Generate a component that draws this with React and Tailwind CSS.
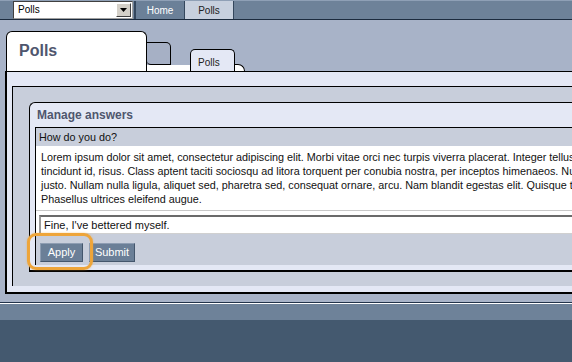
import React from "react";

export default function App() {
  return (
    <div className="relative w-[572px] h-[362px] overflow-hidden bg-[#a8b3c8] flex flex-col font-['Liberation_Sans',Arial,sans-serif] text-[#111]">
      {/* Top bar */}
      <div className="h-[20px] shrink-0 bg-[#6e8299] border-t border-t-[#8fa0b6] border-b border-b-[#1c2b3e] flex items-stretch">
        <div className="ml-[13px] w-[120px] h-[18px] bg-white border border-[#a0a0a0] border-t-[#404040] border-l-[#404040] flex items-center">
          <div className="flex-1 pl-[4px] text-[10px] leading-[12px] text-black">Polls</div>
          <div className="mr-[1px] w-[15px] h-[14px] bg-[#d4d0c8] border border-[#404040] border-t-white border-l-white flex items-center justify-center">
            <svg width="7" height="4" viewBox="0 0 7 4">
              <path d="M0 0H7L3.5 4Z" fill="#000" />
            </svg>
          </div>
        </div>
        <div className="ml-[1px] border-l-2 border-[#34475d] w-[50px] bg-[#6b8098] text-white text-[10px] flex items-center justify-center">
          Home
        </div>
        <div className="border-l border-[#34475d] w-[49px] bg-[#c7d0de] text-[#222] text-[10px] flex items-center justify-center">
          Polls
        </div>
        <div className="w-[1px] bg-[#34475d]" />
      </div>

      {/* Tabs */}
      <div className="h-[51px] shrink-0 flex items-end pl-[6px]">
        <div className="w-[141px] h-[40px] bg-white border border-b-0 border-black rounded-t-[6px] pl-[12px] pt-[9px] text-[16px] leading-[20px] font-bold text-[#4f566e]">
          Polls
        </div>
        <div className="w-[43px] h-[29px] flex flex-col">
          <div className="w-[24px] h-[23px] bg-[#a6b0c5] border-t border-r border-b border-black rounded-tr-[5px] rounded-bl-[4px]" />
          <div className="h-[6px] bg-white" />
        </div>
        <div className="w-[45px] h-[22px] bg-[#e4e8f5] border border-b-0 border-black rounded-t-[5px] pl-[7px] pt-[7px] text-[10px] leading-[12px] text-[#222]">
          Polls
        </div>
        <div className="w-[10px] h-[7px] bg-white border-t border-r border-black rounded-tr-[7px]" />
      </div>

      {/* Outer panel */}
      <div className="ml-[5px] w-[640px] shrink-0 border-t border-l-2 border-b-2 border-black bg-[#e4e8f5] pl-[5px] pt-[14px] pb-[6px]">
        <div className="border-t border-l border-black bg-[#c8cedb] pl-[16px] pt-[15px] pb-[14px]">
          <div className="border-t border-l border-b-2 border-black rounded-tl-[6px] bg-[#e4e8f5] pb-[5px]">
            <div className="h-[24px] pl-[7px] flex items-center text-[12px] font-bold text-[#4f566e]">
              Manage answers
            </div>
            <div className="ml-[5px] border-t border-l border-black">
              <div className="h-[18px] bg-[#c8cedb] pl-[3px] flex items-center text-[10.8px] text-[#111]">
                How do you do?
              </div>
              <div className="bg-white">
                <div className="pl-[5px] pt-[4px] pb-[4px] text-[10.8px] leading-[14px] text-[#111] whitespace-nowrap border-b border-[#c8c8c8]">
                  <div>Lorem ipsum dolor sit amet, consectetur adipiscing elit. Morbi vitae orci nec turpis viverra placerat. Integer tellus</div>
                  <div>tincidunt id, risus. Class aptent taciti sociosqu ad litora torquent per conubia nostra, per inceptos himenaeos. Nulla</div>
                  <div>justo. Nullam nulla ligula, aliquet sed, pharetra sed, consequat ornare, arcu. Nam blandit egestas elit. Quisque tempor</div>
                  <div>Phasellus ultrices eleifend augue.</div>
                </div>
                <div className="pt-[4px]">
                  <div className="ml-[3px] h-[19px] bg-white border-t-2 border-l-2 border-b border-t-[#6a6a6a] border-l-[#9a9a9a] border-b-[#d0d0d0] pl-[3px] flex items-center text-[11px] text-[#111]">
                    Fine, I've bettered myself.
                  </div>
                </div>
              </div>
              <div className="h-[31px] bg-[#c8cedb] pl-[4px] pt-[9px] flex items-start">
                <div className="w-[43px] h-[19px] bg-[#6b7f97] border border-[#44566c] border-t-[#8e9db2] border-l-[#8e9db2] text-white text-[11px] flex items-center justify-center">
                  Apply
                </div>
                <div className="ml-[6px] w-[46px] h-[19px] bg-[#6b7f97] border border-[#44566c] border-t-[#8e9db2] border-l-[#8e9db2] text-white text-[11px] flex items-center justify-center">
                  Submit
                </div>
              </div>
            </div>
          </div>
        </div>
      </div>

      {/* Bottom bands */}
      <div className="mt-[8px] h-[1px] shrink-0 bg-[#22334a]" />
      <div className="h-[1px] shrink-0 bg-white" />
      <div className="h-[16px] shrink-0 bg-[#6e8299]" />
      <div className="flex-1 bg-[#44596f]" />

      {/* Highlight ring */}
      <div className="absolute left-[27px] top-[233px] w-[66px] h-[37px] border-[3px] border-[#eea53a] rounded-[9px] shadow-[0_0_2px_rgba(238,165,58,0.6)]" />
    </div>
  );
}
